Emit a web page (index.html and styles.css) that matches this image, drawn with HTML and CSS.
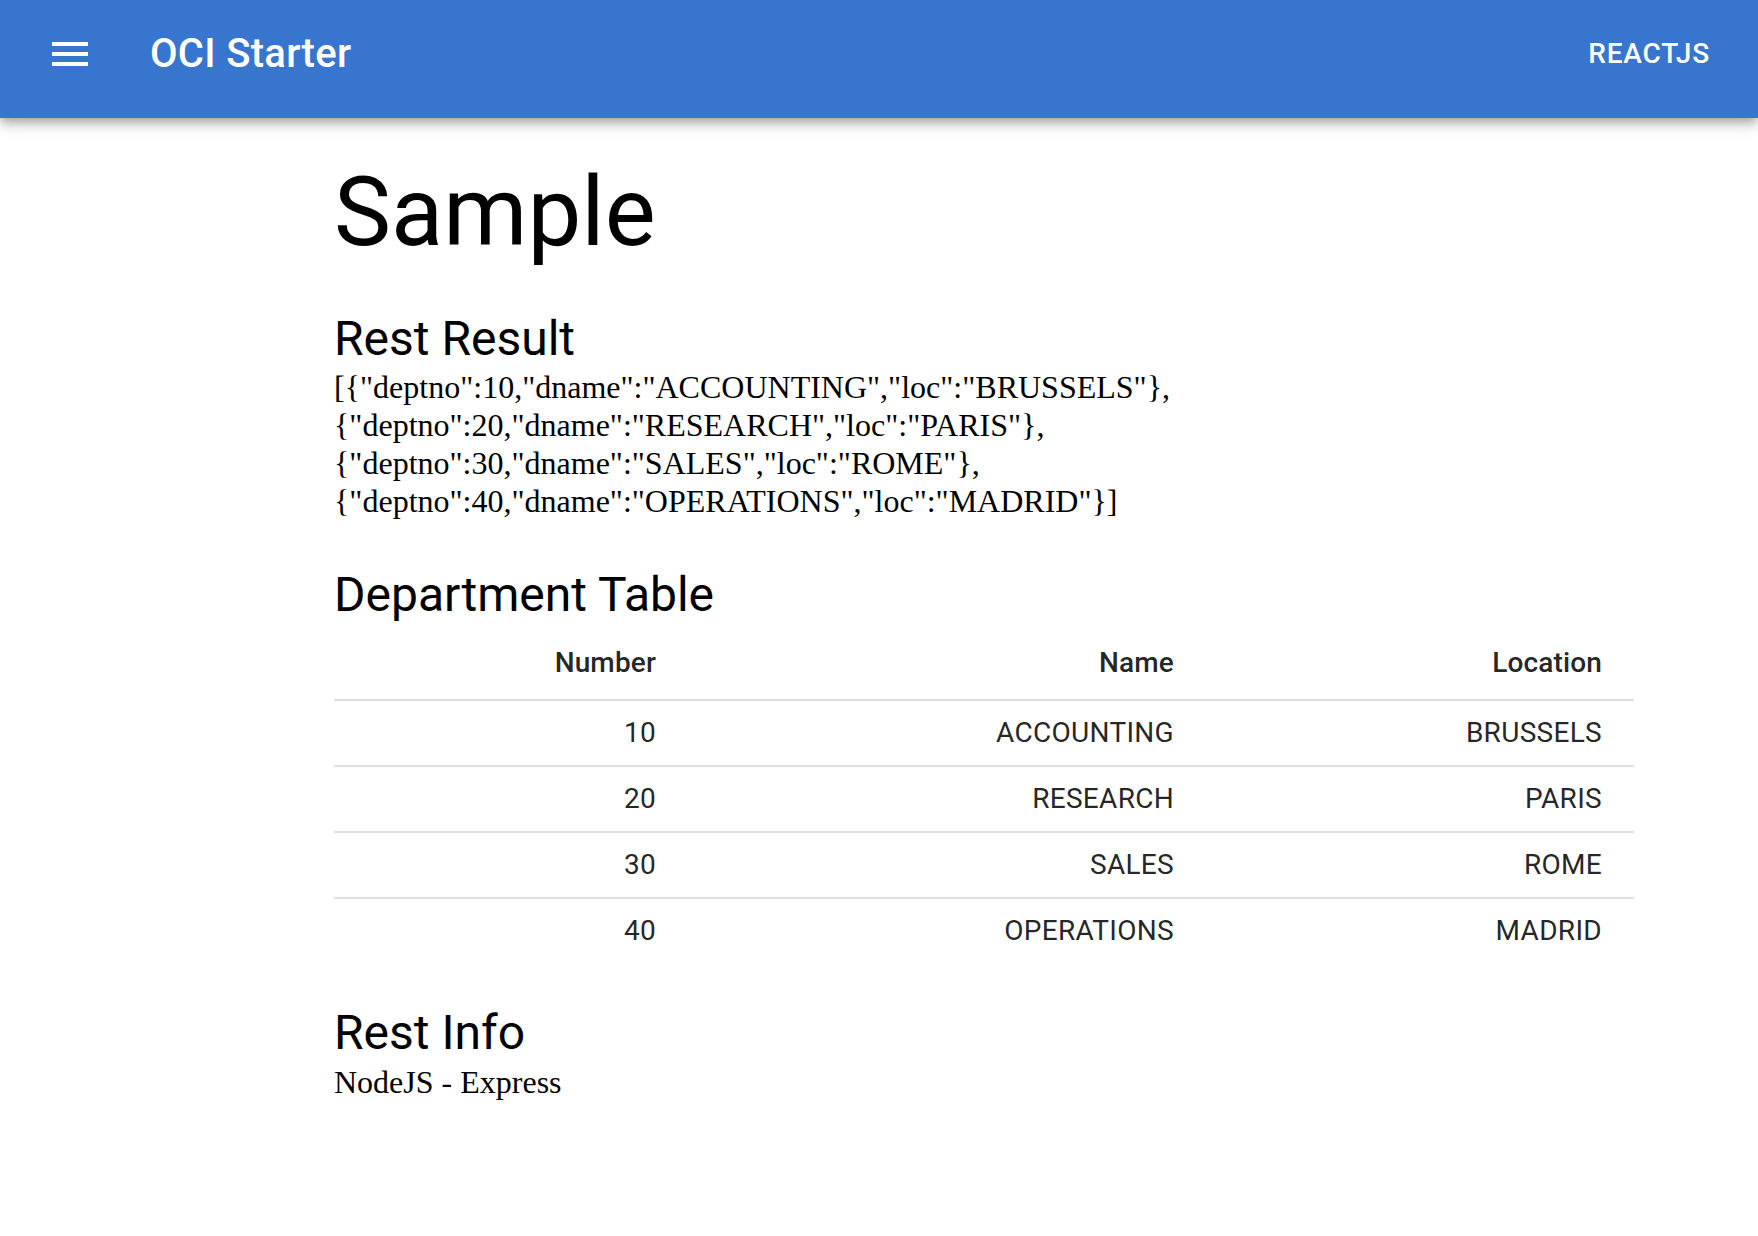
FILE: index.html
```html
<!DOCTYPE html>
<html lang="en">
<head>
<meta charset="utf-8">
<title>OCI Starter</title>
<link rel="stylesheet" href="styles.css">
</head>
<body>
<header class="appbar">
  <span class="menu-btn" aria-label="menu">
    <svg class="menu-icon" viewBox="0 0 24 24" width="48" height="48"><path fill="#fff" d="M3 18h18v-2H3v2zm0-5h18v-2H3v2zm0-7v2h18V6H3z"/></svg>
  </span>
  <div class="appbar-title">OCI Starter</div>
  <div class="appbar-spacer"></div>
  <span class="appbar-button">ReactJS</span>
</header>
<main class="content">
  <h1 class="page-title">Sample</h1>
  <h2 class="section-title first">Rest Result</h2>
  <div class="json">[{"deptno":10,"dname":"ACCOUNTING","loc":"BRUSSELS"},{"deptno":20,"dname":"RESEARCH","loc":"PARIS"},{"deptno":30,"dname":"SALES","loc":"ROME"},{"deptno":40,"dname":"OPERATIONS","loc":"MADRID"}]</div>
  <h2 class="section-title table-title">Department Table</h2>
  <table class="dept-table">
    <colgroup>
      <col class="col-number">
      <col class="col-name">
      <col class="col-loc">
    </colgroup>
    <thead>
      <tr><th>Number</th><th>Name</th><th>Location</th></tr>
    </thead>
    <tbody>
      <tr><td>10</td><td>ACCOUNTING</td><td>BRUSSELS</td></tr>
      <tr><td>20</td><td>RESEARCH</td><td>PARIS</td></tr>
      <tr><td>30</td><td>SALES</td><td>ROME</td></tr>
      <tr><td>40</td><td>OPERATIONS</td><td>MADRID</td></tr>
    </tbody>
  </table>
  <h2 class="section-title info">Rest Info</h2>
  <div class="info-text">NodeJS - Express</div>
</main>
</body>
</html>
```
FILE: styles.css
```css
html, body {
  margin: 0;
  padding: 0;
  background: #ffffff;
}
body {
  font-family: "Liberation Serif", "Times New Roman", serif;
  font-size: 32px;
  line-height: 38px;
  color: #000;
}
.appbar {
  display: flex;
  align-items: center;
  box-sizing: border-box;
  height: 118px;
  padding: 0 48px 10px 46px;
  background: #3875cf;
  color: #fff;
  font-family: Roboto, "Liberation Sans", sans-serif;
  box-shadow: 0 4px 8px -2px rgba(0,0,0,0.2), 0 8px 10px 0 rgba(0,0,0,0.14), 0 2px 20px 0 rgba(0,0,0,0.12);
  position: relative;
}
.menu-btn {
  display: flex;
  width: 48px;
  height: 48px;
}
.menu-icon {
  display: block;
}
.appbar-title {
  margin-left: 56px;
  font-size: 40px;
  font-weight: 500;
  letter-spacing: 0.3px;
  line-height: 64px;
}
.appbar-spacer {
  flex: 1;
}
.appbar-button {
  font-size: 28px;
  font-weight: 500;
  letter-spacing: 0.8px;
  text-transform: uppercase;
  line-height: 48px;
}
.content {
  margin-left: 334px;
  width: 1300px;
}
.page-title {
  margin: 38px 0 0 0;
  font-family: Roboto, "Liberation Sans", sans-serif;
  font-weight: 400;
  font-size: 96px;
  line-height: 112px;
}
.section-title {
  margin: 40px 0 0 0;
  font-family: Roboto, "Liberation Sans", sans-serif;
  font-weight: 400;
  font-size: 48px;
  line-height: 64px;
}
.section-title.first {
  margin-top: 39px;
}
.section-title.table-title {
  margin-top: 43px;
}
.section-title.info {
  margin-top: 38px;
}
.json {
  margin-top: -3px;
}
.dept-table {
  width: 1300px;
  table-layout: fixed;
  border-collapse: collapse;
  font-family: Roboto, "Liberation Sans", sans-serif;
  color: rgba(0,0,0,0.87);
}
.col-number { width: 354px; }
.col-name { width: 518px; }
.col-loc { width: 428px; }
.dept-table th,
.dept-table td {
  text-align: right;
  padding: 12px 32px;
  border-bottom: 2px solid #e0e0e0;
  font-size: 28px;
  letter-spacing: 0.3px;
}
.dept-table th {
  font-weight: 500;
  line-height: 48px;
  letter-spacing: 0.15px;
}
.dept-table td {
  font-weight: 400;
  line-height: 40px;
}
.dept-table tbody tr:last-child td {
  border-bottom: 0;
}
.info-text {
  margin-top: -2px;
}
```
